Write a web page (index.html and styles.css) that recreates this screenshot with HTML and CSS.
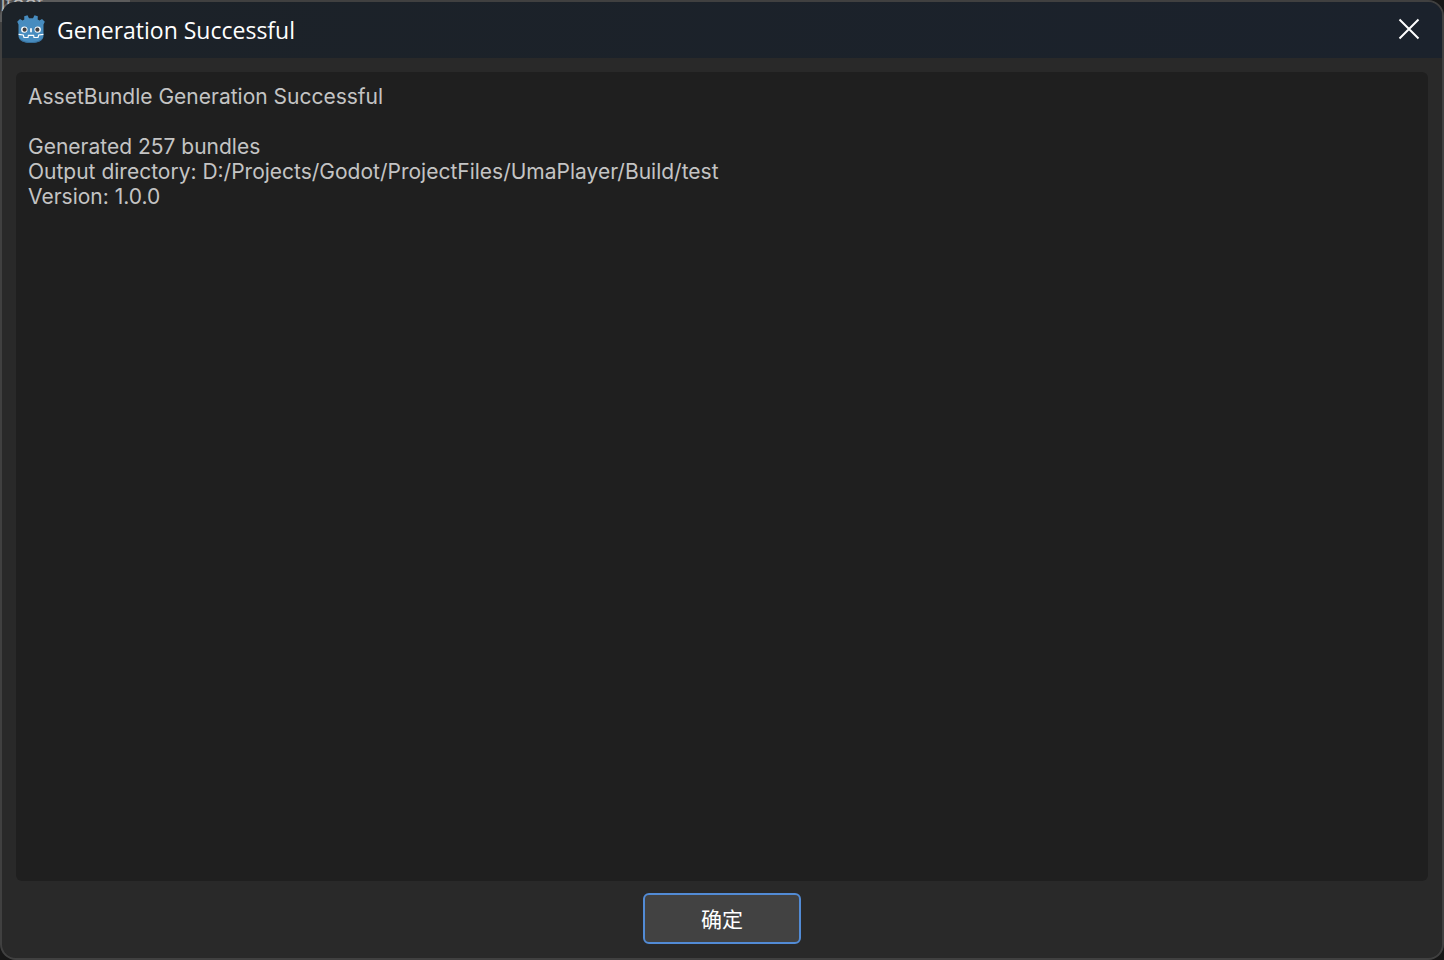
FILE: index.html
```html
<!DOCTYPE html>
<html lang="zh-CN">
<head>
    <meta charset="UTF-8">
    <meta name="viewport" content="width=device-width, initial-scale=1.0">
    <title>Generation Successful</title>
    <link rel="stylesheet" href="styles.css">
</head>
<body>
    <!-- Editor behind the dialog -->
    <div class="backdrop" aria-hidden="true">hitect</div>

    <div class="dialog" role="dialog" aria-labelledby="dialogTitle">
        <header class="title-bar">
            <svg class="logo" viewBox="0 0 28 28" aria-hidden="true">
                <path fill="#478cbf" d="M7.200 1.300 10.500.3 12 3.300H16L17.500.3 20.800 1.300 20.700 4.500 22.500 5.500 25 4 27.800 6.800 26.500 9.500V21C26.500 25.500 20.500 28 14 28S1.500 25.500 1.500 21V9.500L.2 6.800 3 4 5.500 5.500 7.300 4.500Z"/>
                <path fill="#376f9a" d="M2 22.500C4 25.600 9 27 14 27S24 25.600 26 22.500C25.200 26.300 20 28 14 28S2.800 26.300 2 22.500Z"/>
                <path fill="none" stroke="#fff" stroke-width="1.200" d="M1.600 19.300 6.300 20 7 22.500H11L11.400 20.300H16.600L17 22.500H21L21.700 20 26.400 19.300"/>
                <circle cx="7.300" cy="14.600" r="3.200" fill="#fff"/>
                <circle cx="20.700" cy="14.600" r="3.200" fill="#fff"/>
                <circle cx="7.600" cy="14.700" r="2.100" fill="#414042"/>
                <circle cx="20.400" cy="14.700" r="2.100" fill="#414042"/>
                <path stroke="#fff" stroke-width="1.700" stroke-linecap="round" d="M14 13.800V16.600"/>
            </svg>
            <h1 id="dialogTitle">Generation Successful</h1>
            <button type="button" class="close-btn" aria-label="关闭">
                <svg viewBox="0 0 22 22" aria-hidden="true">
                    <path d="M1.500 1.500 20.500 20.500M20.500 1.500 1.500 20.500"/>
                </svg>
            </button>
        </header>

        <main class="message">AssetBundle Generation Successful

Generated 257 bundles
Output directory: D:/Projects/Godot/ProjectFiles/UmaPlayer/Build/test
Version: 1.0.0</main>

        <footer class="actions">
            <button type="button" class="ok-btn" autofocus>确定</button>
        </footer>
    </div>
</body>
</html>
```

FILE: styles.css
```css
* {
    box-sizing: border-box;
}
body {
    margin: 0;
    height: 100vh;
    overflow: hidden;
    background: #171717;
    font-family: Inter, "Noto Sans CJK SC", sans-serif;
    font-size: 21px;
}
.backdrop {
    position: absolute;
    top: 0;
    left: 0;
    z-index: -1;
    width: 130px;
    height: 22px;
    overflow: hidden;
    background: #383838;
    color: #aaa;
    line-height: 8px;
    text-indent: -12px;
}
.dialog {
    display: flex;
    flex-direction: column;
    height: 100%;
    border: 2px solid rgba(255, 255, 255, 0.18);
    border-radius: 16px;
    overflow: hidden;
    background: #292929;
    background-clip: padding-box;
}
.title-bar {
    display: flex;
    align-items: center;
    height: 56px;
    padding: 0 22px 2px 15px;
    background: linear-gradient(90deg, #1c2228, #1b222c);
}
.logo {
    width: 28px;
    height: 28px;
    margin-right: 12px;
}
h1 {
    flex: 1;
    margin: 0;
    padding-top: 2px;
    color: #fff;
    font-family: "Segoe UI", "Open Sans", sans-serif;
    font-size: 23px;
    font-weight: 400;
}
.close-btn {
    display: flex;
    padding: 0;
    border: none;
    background: none;
    cursor: pointer;
}
.close-btn svg {
    width: 22px;
    height: 22px;
    fill: none;
    stroke: #fff;
    stroke-width: 2;
}
.message {
    flex: 1;
    margin: 14px 14px 12px;
    padding: 12px;
    border-radius: 6px;
    background: #1f1f1f;
    color: #c4c4c4;
    line-height: 25px;
    white-space: pre-line;
    overflow: auto;
}
.actions {
    display: flex;
    justify-content: center;
    padding-bottom: 14px;
}
.ok-btn {
    width: 158px;
    height: 51px;
    padding: 0 0 2px;
    border: 2px solid #528bd5;
    border-radius: 6px;
    outline: none;
    background: #424242;
    color: #fff;
    font: inherit;
    cursor: pointer;
}
.ok-btn:hover {
    background: #4c4c4c;
}
```
